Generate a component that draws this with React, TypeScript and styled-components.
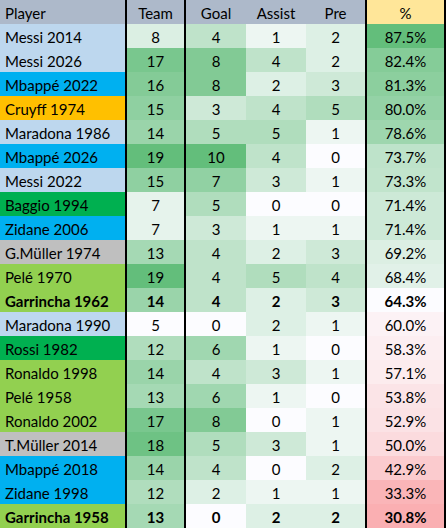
import styled, { createGlobalStyle } from "styled-components";

type Row = [string, string, number, number, number, number, number, boolean?];

const nation: Record<string, string> = {
  arg: "#BDD7EE",
  fra: "#00B0F0",
  ned: "#FFC000",
  ita: "#00B050",
  ger: "#BFBFBF",
  bra: "#92D050",
};

const rows: Row[] = [
  ["Messi 2014", "arg", 8, 4, 1, 2, 87.5],
  ["Messi 2026", "arg", 17, 8, 4, 2, 82.4],
  ["Mbappé 2022", "fra", 16, 8, 2, 3, 81.3],
  ["Cruyff 1974", "ned", 15, 3, 4, 5, 80.0],
  ["Maradona 1986", "arg", 14, 5, 5, 1, 78.6],
  ["Mbappé 2026", "fra", 19, 10, 4, 0, 73.7],
  ["Messi 2022", "arg", 15, 7, 3, 1, 73.3],
  ["Baggio 1994", "ita", 7, 5, 0, 0, 71.4],
  ["Zidane 2006", "fra", 7, 3, 1, 1, 71.4],
  ["G.Müller 1974", "ger", 13, 4, 2, 3, 69.2],
  ["Pelé 1970", "bra", 19, 4, 5, 4, 68.4],
  ["Garrincha 1962", "bra", 14, 4, 2, 3, 64.3, true],
  ["Maradona 1990", "arg", 5, 0, 2, 1, 60.0],
  ["Rossi 1982", "ita", 12, 6, 1, 0, 58.3],
  ["Ronaldo 1998", "bra", 14, 4, 3, 1, 57.1],
  ["Pelé 1958", "bra", 13, 6, 1, 0, 53.8],
  ["Ronaldo 2002", "bra", 17, 8, 0, 1, 52.9],
  ["T.Müller 2014", "ger", 18, 5, 3, 1, 50.0],
  ["Mbappé 2018", "fra", 14, 4, 0, 2, 42.9],
  ["Zidane 1998", "fra", 12, 2, 1, 1, 33.3],
  ["Garrincha 1958", "bra", 13, 0, 2, 2, 30.8, true],
];

const white = [252, 252, 255];
const green = [99, 190, 123];
const red = [248, 105, 107];

const mix = (a: number[], b: number[], t: number) => {
  const k = Math.max(0, Math.min(1, t));
  return `rgb(${a.map((v, i) => Math.round(v + (b[i] - v) * k)).join(",")})`;
};

// white -> green scale between min and max
const scale = (v: number, min: number, max: number) =>
  mix(white, green, (v - min) / (max - min));

const pctColor = (v: number) =>
  v < 64.3 ? mix(red, white, v / 64.3) : mix(white, green, (v - 64.3) / (87.5 - 64.3));

export default function App() {
  return (
    <>
      <GlobalStyle />
      <Table>
        <HeadCell align="left" edge>
          Player
        </HeadCell>
        <HeadCell edge>Team</HeadCell>
        <HeadCell>Goal</HeadCell>
        <HeadCell>Assist</HeadCell>
        <HeadCell edge>Pre</HeadCell>
        <PctHead edge>%</PctHead>
        {rows.map(([name, n, team, goal, assist, pre, pct, bold]) => (
          <TableRow key={name} bold={bold}>
            <NameCell bg={nation[n]}>{name}</NameCell>
            <Cell bg={scale(team, 5, 19)} edge>
              {team}
            </Cell>
            <Cell bg={scale(goal, 0, 10)}>{goal}</Cell>
            <Cell bg={scale(assist, 0, 10)}>{assist}</Cell>
            <Cell bg={scale(pre, 0, 10)} edge>
              {pre}
            </Cell>
            <Cell bg={pctColor(pct)} edge>
              {pct.toFixed(1)}%
            </Cell>
          </TableRow>
        ))}
      </Table>
    </>
  );
}

const GlobalStyle = createGlobalStyle`
  * { box-sizing: border-box; }
  body {
    margin: 0;
    background: #ffffff;
    font-family: Lato, "Liberation Sans", sans-serif;
    color: #000;
  }
`;

const Table = styled.div`
  width: 446px;
  display: grid;
  grid-template-columns: 127px 59px 60px 60px 61px 79px;
  grid-auto-rows: 24px;
  font-size: 15px;
`;

const HeadCell = styled.div<{ align?: string; edge?: boolean }>`
  height: 26px;
  display: flex;
  align-items: center;
  justify-content: ${({ align }) => (align === "left" ? "flex-start" : "center")};
  padding: 1px 5px 0;
  background-color: #adb9ca;
  border-bottom: 2px solid #000;
  border-right: ${({ edge }) => (edge ? "2px solid #000" : "0")};
`;

const PctHead = styled(HeadCell)`
  background-color: #ffe699;
`;

const TableRow = styled.div<{ bold?: boolean }>`
  display: contents;
  font-weight: ${({ bold }) => (bold ? 700 : 400)};
`;

const Cell = styled.div<{ bg: string; edge?: boolean }>`
  display: flex;
  align-items: center;
  justify-content: center;
  padding-top: 2px;
  background-color: ${({ bg }) => bg};
  border-right: ${({ edge }) => (edge ? "2px solid #000" : "0")};
`;

const NameCell = styled.div<{ bg: string }>`
  display: flex;
  align-items: center;
  padding: 2px 4px 0 5px;
  white-space: nowrap;
  overflow: hidden;
  background-color: ${({ bg }) => bg};
  border-right: 2px solid #000;
`;
